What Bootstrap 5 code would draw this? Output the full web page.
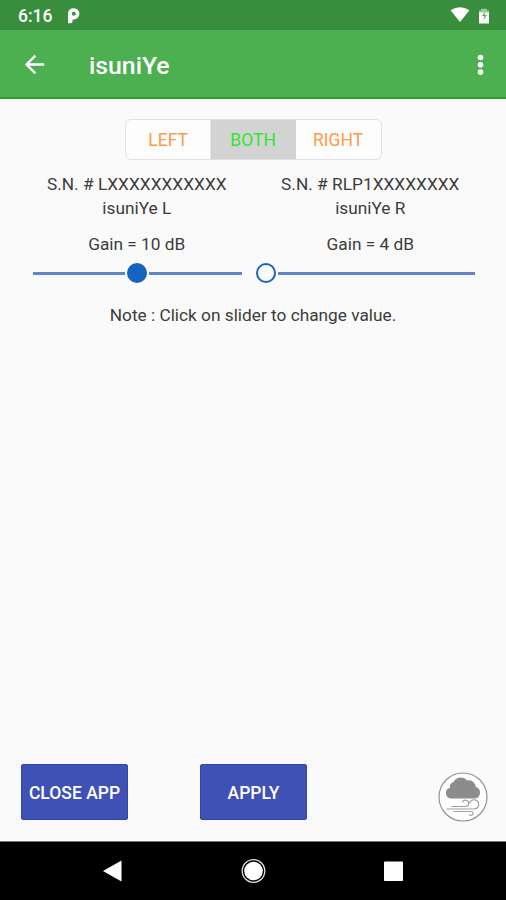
<!DOCTYPE html>
<html lang="en">
<head>
<meta charset="utf-8">
<meta name="viewport" content="width=device-width, initial-scale=1">
<title>isuniYe</title>
<link href="https://cdn.jsdelivr.net/npm/bootstrap@5.3.0/dist/css/bootstrap.min.css" rel="stylesheet">
<style>
body { font-family: Roboto, sans-serif; background: #fafafa; color: #3c3c3c; font-size: 17.25px; height: 900px; overflow: hidden; }
svg { display: block; flex: none; }
.status-bar { height: 30px; background: #388e3c; padding: 2px 16px 0 18px; }
.clock { font-size: 17.5px; font-weight: 500; line-height: 28px; width: 48px; }
.app-bar { height: 69px; background: #4caf50; border-bottom: 2px solid #25a02f; padding: 2px 19px 0 20px; }
.app-title { font-size: 24.8px; font-weight: 500; line-height: 30px; margin: 2px 0 0 40px; }
.side-switch { width: 257px; height: 41px; margin-top: 20px; border: 1px solid #e0e0e0; border-radius: 6px; overflow: hidden; background: #fdfdfd; }
.side-switch .btn { font-size: 17.5px; line-height: 1; border-radius: 0; border: 0; color: #ff9a45; padding: 2px 0 0; }
.side-switch .btn.active { background: #d3d3d3; color: #2ee62e; }
.side-switch .btn + .btn { border-left: 1px solid #e2e2e2; }
.devices { padding: 0 19px 0 20px; margin-top: 12px; }
.line { line-height: 24px; }
.serial { letter-spacing: .03px; }
.gain { line-height: 24px; margin-top: 12px; }
.slider { height: 20px; margin: 7px 12px 0 13px; }
.slider .track { height: 3px; background: #5f86cb; }
.slider .knob { width: 20px; height: 20px; border-radius: 50%; border: 2px solid #1763c0; flex: none; margin: 0 2px; }
.slider .knob.on { background: #1565c0; }
.slider.at-start { margin-left: 0; }
.note { line-height: 24px; margin-top: 20px; }
.actions { height: 58px; padding: 0 18px 0 21px; margin-bottom: 19px; }
.action { width: 107px; height: 56px; border-radius: 2px; border: 1px solid #3445ae; background: #3f51b5; color: #fff; font-size: 17.5px; font-weight: 500; padding: 2px 0 0; white-space: nowrap; }
.action + .action { margin-left: 72px; }
.nav-keys { height: 59px; background: #000; border-top: 1px solid #777; }
</style>
<script src="https://cdn.jsdelivr.net/npm/bootstrap@5.3.0/dist/js/bootstrap.bundle.min.js"></script>
</head>
<body class="d-flex flex-column">
<header class="text-white">
  <div class="status-bar d-flex align-items-center">
    <span class="clock">6:16</span>
    <svg width="16" height="18" viewBox="0 0 16 18"><path d="M7.800 1.200a5.600 5.600 0 1 1 0 11.200H6.600V14a2.300 2.300 0 0 1-2.300 2.300H2V6.500a5.300 5.300 0 0 1 5.800-5.300z" fill="#fff"/><circle cx="7.800" cy="6.800" r="2" fill="#388e3c"/></svg>
    <svg class="ms-auto" width="20" height="18" viewBox="0 0 20 18"><path d="M.5 3.300Q10-2.800 19.500 3.300L10 15z" fill="#fff"/></svg>
    <svg class="ms-2" width="12" height="18" viewBox="0 0 12 18"><path d="M1 6V3.500h2V1.800h6v1.700h2V6z" fill="#9ccb9e"/><path d="M1 5.500h10v11H1z" fill="#fff"/><path d="M7 4.500L4 9h2.500L5 13.500 9 8H6.500z" fill="#5fa763"/></svg>
  </div>
  <nav class="app-bar d-flex align-items-center">
    <svg width="29" height="29" viewBox="0 0 24 24" fill="#fff"><path d="M20 11H7.830l5.590-5.590L12 4l-8 8 8 8 1.410-1.410L7.830 13H20z"/></svg>
    <span class="app-title">isuniYe</span>
    <svg class="ms-auto" width="13" height="22" viewBox="0 0 13 22" fill="#fff"><circle cx="6.500" cy="3.500" r="2.800"/><circle cx="6.500" cy="10.800" r="2.800"/><circle cx="6.500" cy="18.100" r="2.800"/></svg>
  </nav>
</header>
<main class="flex-grow-1 d-flex flex-column">
  <div class="side-switch btn-group align-self-center">
    <button class="btn w-100">LEFT</button>
    <button class="btn w-100 active">BOTH</button>
    <button class="btn w-100">RIGHT</button>
  </div>
  <div class="devices row g-0 text-center">
    <section class="col-6">
      <div class="line serial">S.N. # LXXXXXXXXXXX</div>
      <div class="line">isuniYe L</div>
      <div class="gain">Gain = 10 dB</div>
      <div class="slider d-flex align-items-center">
        <span class="track flex-fill"></span><span class="knob on"></span><span class="track flex-fill"></span>
      </div>
    </section>
    <section class="col-6">
      <div class="line serial">S.N. # RLP1XXXXXXXX</div>
      <div class="line">isuniYe R</div>
      <div class="gain">Gain = 4 dB</div>
      <div class="slider at-start d-flex align-items-center">
        <span class="knob"></span><span class="track flex-fill"></span>
      </div>
    </section>
  </div>
  <div class="note text-center">Note : Click on slider to change value.</div>
  <div class="actions d-flex mt-auto">
    <button class="btn action">CLOSE APP</button>
    <button class="btn action">APPLY</button>
    <svg class="ms-auto mt-auto" width="50" height="50" viewBox="0 0 50 50">
      <circle cx="25" cy="25" r="24" fill="#fff" stroke="#939393" stroke-width="1.200"/>
      <path d="M13.500 26.500a5.500 5.500 0 0 1-1.500-10.800 5 5 0 0 1 3.500-5.700 8 8 0 0 1 13.500-1.500 7 7 0 0 1 8.800 6.500 5.900 5.900 0 0 1-1 11.500z" fill="#8c8c8c"/>
      <g fill="none" stroke="#a0a0a0" stroke-width="1.200" stroke-linecap="round"><path d="M14 34.500h13.500a3.200 3.200 0 1 0-3-4.500"/><path d="M9 37h27a4.600 4.600 0 1 0-4.300-6"/><path d="M16 39.500h17a2 2 0 1 1-1.500 3.200"/></g>
    </svg>
  </div>
</main>
<footer class="nav-keys d-flex align-items-center justify-content-center">
  <svg width="300" height="30" viewBox="0 0 300 30" fill="#fff"><path d="M0 15L18.500 4.500v21z"/><circle cx="150.500" cy="15" r="9.300"/><circle cx="150.500" cy="15" r="11.300" fill="none" stroke="#ddd" stroke-width="1.300"/><rect x="281" y="5.500" width="19" height="19.500" rx=".8"/></svg>
</footer>
</body>
</html>
